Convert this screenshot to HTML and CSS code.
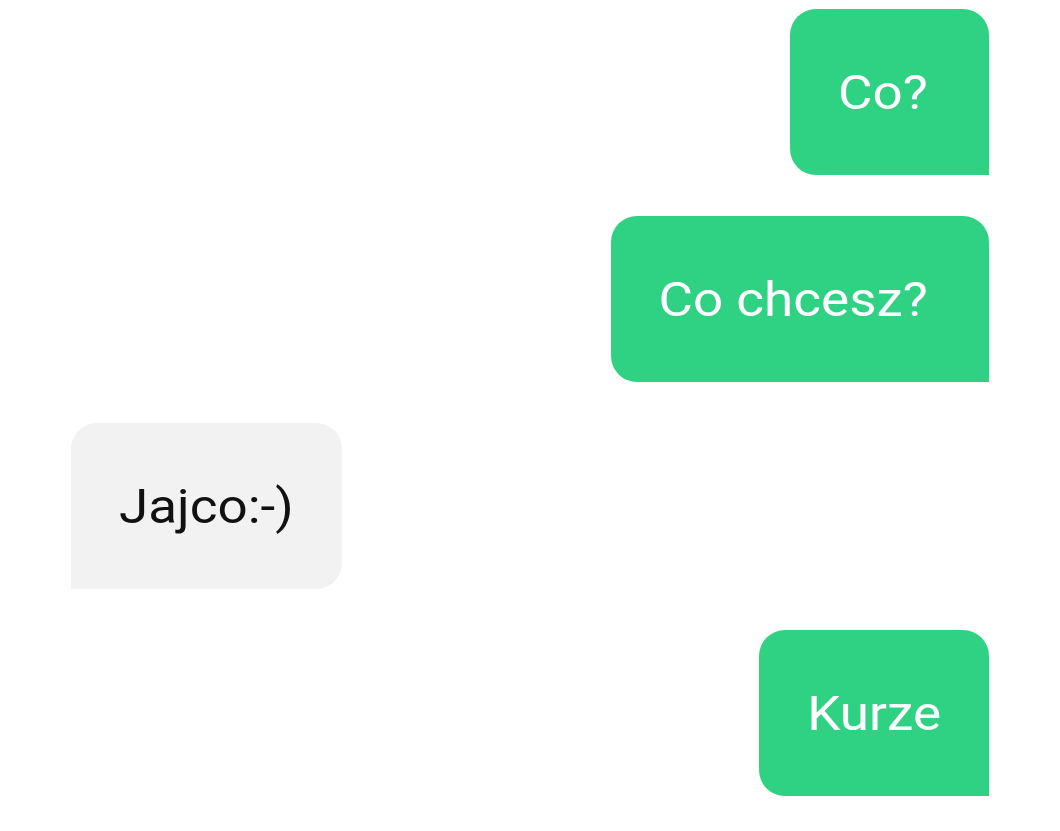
FILE: index.html
```html
<!DOCTYPE html>
<html lang="pl">
<head>
<meta charset="utf-8">
<title>Czat</title>
<link rel="stylesheet" href="styles.css">
</head>
<body>
<div class="chat">
  <div class="msg out"><span class="txt">Co?&nbsp;</span></div>
  <div class="msg out"><span class="txt">Co chcesz?&nbsp;</span></div>
  <div class="msg in"><span class="txt">Jajco:-)</span></div>
  <div class="msg out"><span class="txt">Kurze</span></div>
</div>
</body>
</html>
```
FILE: styles.css
```css
html, body {
  margin: 0;
  padding: 0;
  background: #ffffff;
}
.chat {
  display: flex;
  flex-direction: column;
  gap: 41px;
  padding: 9px 71px 0 71px;
  font-family: Roboto, "Liberation Sans", sans-serif;
}
.msg {
  height: 166px;
  box-sizing: border-box;
  padding: 0 48px;
  display: flex;
  align-items: center;
  font-size: 53px;
  border-radius: 26px;
}
.txt {
  display: inline-block;
  white-space: pre;
  transform: translateY(1px) scaleY(0.9);
}
.out {
  align-self: flex-end;
  background: #2ed282;
  color: #ffffff;
  border-bottom-right-radius: 0;
}
.in {
  align-self: flex-start;
  background: #f2f2f2;
  color: #111111;
  border-bottom-left-radius: 0;
}
```
